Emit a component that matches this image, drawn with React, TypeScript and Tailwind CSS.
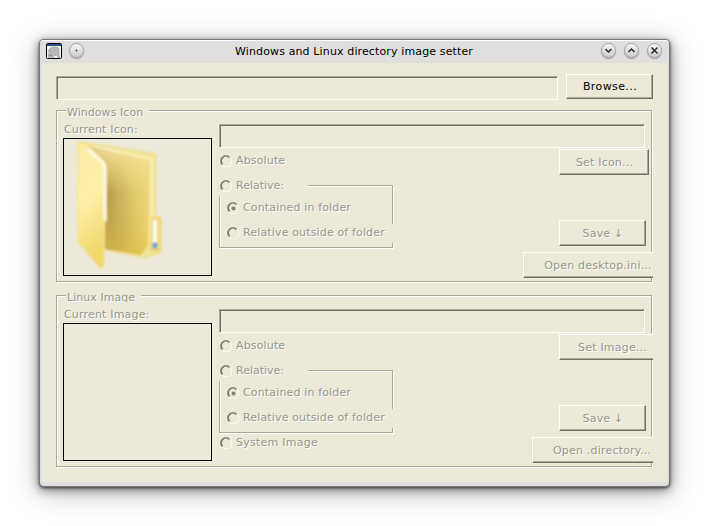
import type { ReactNode } from "react";

const etched = "text-[#98968b] [text-shadow:1px_1px_0_#ffffff]";

function Field({ className = "" }: { className?: string }) {
  return (
    <div className={`shrink-0 border border-t-[#aca899] border-l-[#aca899] border-r-white border-b-white ${className}`}>
      <div className="h-full w-full border-t border-l border-[#716f64]" />
    </div>
  );
}

function PushButton({ children, className = "", disabled = true }: { children: ReactNode; className?: string; disabled?: boolean }) {
  return (
    <button
      className={`block shrink-0 border border-t-white border-l-white border-r-[#716f64] border-b-[#716f64] bg-[#ece9d8] p-0 ${className}`}
    >
      <span className={`flex h-full w-full items-center justify-center whitespace-pre border-r border-b border-[#aca899] pl-[2px] ${disabled ? `pt-[3px] ${etched}` : "pt-[2px] text-black"}`}>
        {children}
      </span>
    </button>
  );
}

function Radio({ label, checked = false, className = "", spacing = "tracking-[0.15px]" }: { label: string; checked?: boolean; className?: string; spacing?: string }) {
  return (
    <div className={`flex items-start ${className}`}>
      <svg className="mt-px ml-px h-3 w-3 shrink-0" viewBox="0 0 12 12" fill="none">
        <path d="M2 10A5.4 5.4 0 0 1 10 2" stroke="#aca899" />
        <path d="M2.6 9.2A4.5 4.5 0 0 1 9.3 2.6" stroke="#716f64" strokeWidth="1.3" />
        <path d="M10.3 2.5A5.4 5.4 0 0 1 2.2 10.3" stroke="#ffffff" />
        {checked && <circle cx="6.500" cy="6.500" r="2" fill="#858375" />}
      </svg>
      <span className={`ml-1 whitespace-nowrap leading-[13px] ${etched} ${spacing}`}>{label}</span>
    </div>
  );
}

function Folder() {
  return (
    <svg className="ml-[11px] h-[134px] w-[94px]" viewBox="0 0 94 134">
      <defs>
        <linearGradient id="front" x1="0" y1="0" x2="0.2" y2="1">
          <stop offset="0" stopColor="#f8e89c" />
          <stop offset="0.15" stopColor="#fbeea8" />
          <stop offset="0.5" stopColor="#fdf0a9" />
          <stop offset="1" stopColor="#f2d666" />
        </linearGradient>
        <linearGradient id="inner" gradientUnits="userSpaceOnUse" x1="30" y1="60" x2="74" y2="50">
          <stop offset="0" stopColor="#a98d42" />
          <stop offset="0.3" stopColor="#c4a852" />
          <stop offset="0.65" stopColor="#dfc668" />
          <stop offset="1" stopColor="#ecd77c" />
        </linearGradient>
        <linearGradient id="glow" gradientUnits="userSpaceOnUse" x1="55" y1="12" x2="62" y2="112">
          <stop offset="0" stopColor="#f5e5a0" stopOpacity="0.75" />
          <stop offset="0.4" stopColor="#f3dc83" stopOpacity="0.1" />
          <stop offset="1" stopColor="#edcb48" stopOpacity="0.6" />
        </linearGradient>
        <filter id="soft" x="-5%" y="-5%" width="110%" height="110%">
          <feGaussianBlur stdDeviation="0.8" />
        </filter>
      </defs>
      <g filter="url(#soft)">
        <path d="M7 2L58 10L81 14V76L86 78V113L78 115L71 118L30 110Z" fill="#f5e496" stroke="#ecd98c" />
        <path d="M12 6L65 18L74 22L73 105L66 115L30 109V27Z" fill="url(#inner)" />
        <path d="M12 6L65 18L74 22L73 105L66 115L30 109V27Z" fill="url(#glow)" />
        <path d="M17 6L61 16L77 19V76" fill="none" stroke="#faefbd" strokeWidth="2" />
        <path d="M3 3Q3 1 6 1L12 5L31 23V82L29 84V126L25 128L3 102Z" fill="url(#front)" stroke="#efdf93" />
        <path d="M13 9L26 21Q30 25 30 29V80" fill="none" stroke="#fffae6" strokeWidth="3" />
        <path d="M77 77H84Q86 77 86 80V111L80 113L74 110Z" fill="#f0d874" />
        <rect x="78" y="80" width="4" height="23" rx="1" fill="#fffdf1" />
        <rect x="77.500" y="102.500" width="5" height="6" rx="1.500" fill="#5fa4e2" />
      </g>
    </svg>
  );
}

type GroupProps = {
  title: string;
  legend: string;
  caption: string;
  setLabel: string;
  setClass: string;
  openLabel: string;
  openClass: string;
  folder?: boolean;
  system?: boolean;
};

function Group({ title, legend, caption, setLabel, setClass, openLabel, openClass, folder, system }: GroupProps) {
  return (
    <section className="relative flex h-[173px] w-[597px] shrink-0 overflow-x-clip">
      <div className="absolute top-0 right-px bottom-px left-0 border border-[#aca899] shadow-[1px_1px_0_#fff,inset_1px_1px_0_#fff]" />
      <div className="relative ml-[7px] w-[149px] shrink-0">
        <div className={`-mt-[4px] ml-[3px] h-[11px] bg-[#ece9d8] pl-px leading-[13px] tracking-[0.05px] whitespace-nowrap ${etched} ${legend}`}>
          {title}
        </div>
        <div className={`relative ml-px h-[21px] bg-[#ece9d8] pt-[6px] leading-[13px] tracking-[0.18px] ${etched}`}>{caption}</div>
        <div className="h-[138px] border border-black pt-px">{folder && <Folder />}</div>
      </div>
      <div className="relative ml-[7px] shrink-0 pt-[14px]">
        <Field className="h-6 w-[426px]" />
        <div className="flex">
          <div className="relative h-[130px] w-[304px] shrink-0">
            <div className="absolute top-[37px] left-0 h-[63px] w-[174px] border border-[#aca899] shadow-[1px_1px_0_#fff,inset_1px_1px_0_#fff]" />
            <div className="relative flex flex-col">
              <Radio label="Absolute" className="h-[25px] pt-[6px]" />
              <Radio label="Relative:" className="h-[23px] w-[89px] bg-[#ece9d8] pt-[6px]" spacing="" />
              <Radio label="Contained in folder" checked className="mt-[3px] ml-[7px] h-[18px] pt-[2px]" />
              <Radio label="Relative outside of folder" className="mt-[7px] ml-[7px] h-[19px] w-[168px] bg-[#ece9d8] pt-[2px]" />
              {system && <Radio label="System Image" spacing="tracking-[0.25px]" className="mt-[6px] h-[20px] pt-[2px]" />}
            </div>
          </div>
          <div className="flex shrink-0 flex-col tracking-[0.2px]">
            <PushButton className={`mt-px ml-[36px] h-[26px] ${setClass}`}>{setLabel}</PushButton>
            <PushButton className="mt-[45px] ml-[36px] h-[26px] w-[87px]">Save ↓</PushButton>
            <PushButton className={`mt-[6px] h-[26px] ${openClass}`}>{openLabel}</PushButton>
          </div>
        </div>
      </div>
    </section>
  );
}

function TitleButton({ children }: { children: ReactNode }) {
  return (
    <div className="flex h-[15px] w-[15px] items-center justify-center rounded-full border border-[#a5a3a1] bg-linear-to-b from-[#f7f7f6] to-[#cdcbc9] shadow-[0_1px_1px_#9b9997]">
      <svg className="h-[13px] w-[13px] shrink-0" viewBox="0 0 13 13" fill="none" stroke="#292929" strokeWidth="1.5">
        {children}
      </svg>
    </div>
  );
}

export default function App() {
  return (
    <main className="flex h-[526px] w-[709px] overflow-hidden bg-white pt-[40px] pl-[40px] font-['DejaVu_Sans',sans-serif] text-[11px]">
      <div className="flex h-[446px] w-[629px] flex-col rounded-[4px] bg-[#e0dfde] shadow-[0_0_0_1px_#777,0_1px_3px_1px_rgba(0,0,0,0.65),0_3px_10px_2px_rgba(0,0,0,0.35),0_5px_26px_4px_rgba(0,0,0,0.22)]">
        <header className="flex h-[23px] shrink-0 items-start rounded-t-[4px] border-t border-white pt-[2px] pl-[6px]">
          <svg className="h-4 w-4" viewBox="0 0 16 16">
            <rect x="0.500" y="0.500" width="15" height="15" rx="1" fill="#f4f4f4" stroke="#000" />
            <path d="M1 1H15V3H1Z" fill="#275391" />
            <path d="M3 6L6 4H11L13 6V13L14 14V15H12L11 12L8 13L7 15H3L2 11L4 9Z" fill="#b9b9b9" stroke="#999" strokeWidth="0.500" />
            <path d="M2 8H4M3 13L6 12" stroke="#888" />
          </svg>
          <div className="ml-[7px]">
            <TitleButton><circle cx="6.500" cy="6.500" r="0.900" fill="#333" stroke="none" /></TitleButton>
          </div>
          <h1 className="mt-[2px] ml-[151px] w-[366px] leading-[13px] tracking-[0.13px] whitespace-nowrap text-black">Windows and Linux directory image setter</h1>
          <div className="flex gap-2">
            <TitleButton><path d="M3.500 5L6.500 8L9.500 5" /></TitleButton>
            <TitleButton><path d="M3.500 8L6.500 5L9.500 8" /></TitleButton>
            <TitleButton><path d="M3.500 3.500L9.500 9.500M9.500 3.500L3.500 9.500" /></TitleButton>
          </div>
        </header>
        <div className="mr-[2px] ml-[2px] flex h-[419px] shrink-0 flex-col bg-[#ece9d8] pt-[11px] pl-[14px]">
          <div className="flex h-[26px] shrink-0 gap-2">
            <Field className="mt-[2px] h-6 w-[502px]" />
            <PushButton disabled={false} className="h-[25px] w-[87px] tracking-[0.4px]">Browse...</PushButton>
          </div>
          <div className="mt-[10px] flex">
            <Group
              title="Windows Icon" legend="w-[83px]" caption="Current Icon:" folder
              setLabel="Set Icon..." setClass="w-[90px]"
              openLabel="Open desktop.ini..." openClass="w-[149px]"
            />
            <div className="mt-[149px] ml-[14px] flex h-2 w-[2px] flex-col justify-between">
              <i className="h-px bg-[#999]" /><i className="h-px bg-[#999]" /><i className="h-px bg-[#999]" />
            </div>
          </div>
          <div className="mt-[12px] flex">
            <Group
              title="Linux Image" legend="w-[75px]" caption="Current Image:" system
              setLabel="Set Image..." setClass="w-[106px]"
              openLabel="Open .directory..." openClass="ml-[9px] w-[139px]"
            />
          </div>
        </div>
      </div>
    </main>
  );
}
